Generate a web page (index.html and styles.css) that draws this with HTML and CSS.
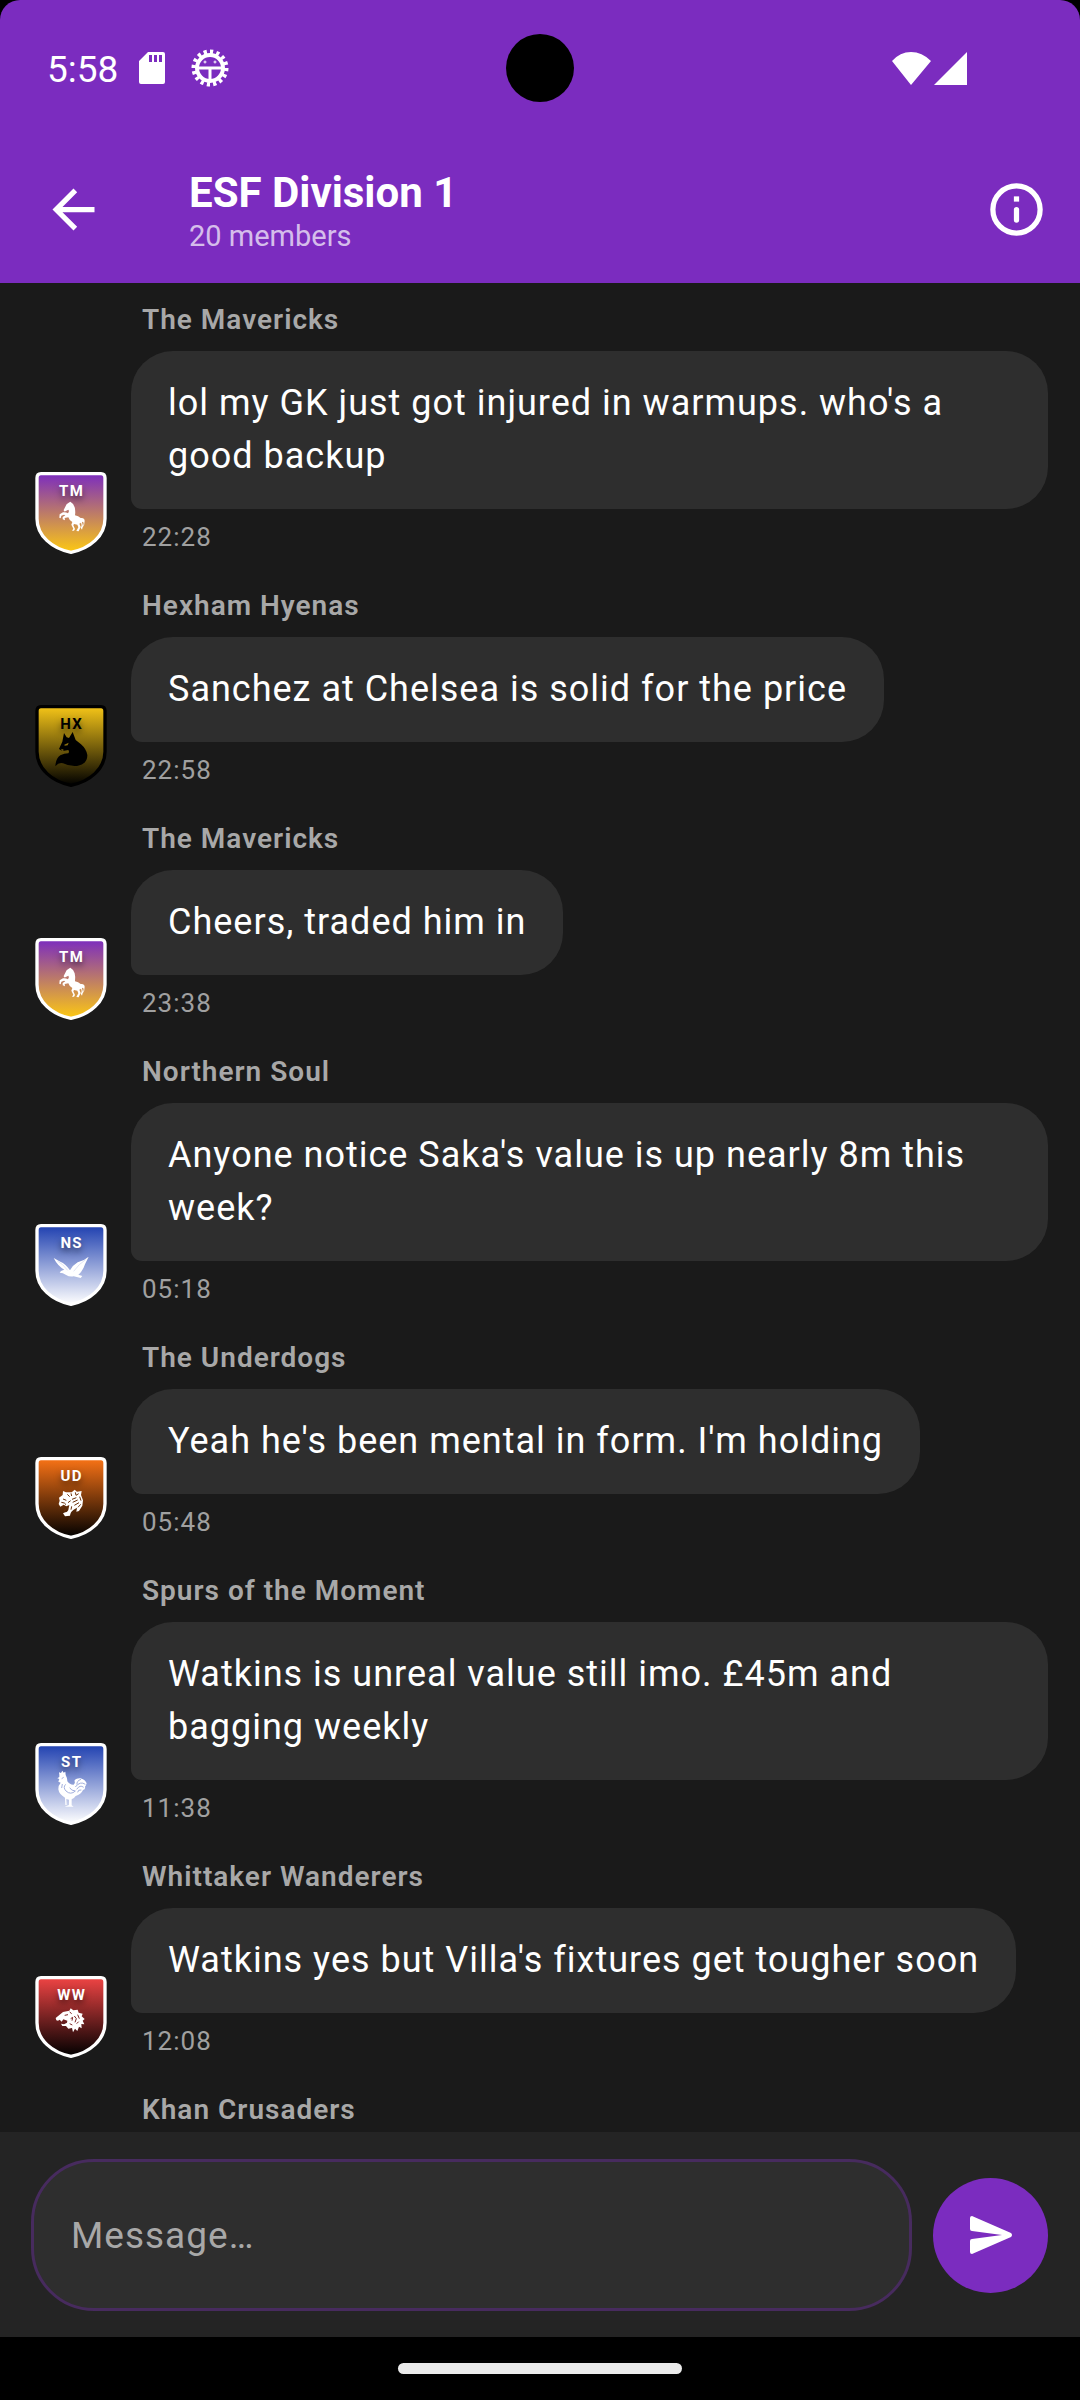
FILE: index.html
```html
<!DOCTYPE html>
<html lang="en">

<head>
    <meta charset="utf-8">
    <meta name="viewport" content="width=device-width, initial-scale=1">
    <title>ESF Division 1</title>
    <link rel="stylesheet" href="styles.css">
</head>

<body>
    <!-- Shared shapes for the club badges -->
    <svg class="defs" aria-hidden="true">
        <defs>
            <linearGradient id="gradTM" x2="0" y2="1"><stop stop-color="#7b2cbf" /><stop offset="1" stop-color="#fdc912" /></linearGradient>
            <linearGradient id="gradHX" x2="0" y2="1"><stop stop-color="#f5c518" /><stop offset="1" stop-color="#000" /></linearGradient>
            <linearGradient id="gradBlue" x2="0" y2="1"><stop stop-color="#1f40b0" /><stop offset="1" stop-color="#fff" /></linearGradient>
            <linearGradient id="gradUD" x2="0" y2="1"><stop stop-color="#f97316" /><stop offset="1" stop-color="#000" /></linearGradient>
            <linearGradient id="gradWW" x2="0" y2="1"><stop stop-color="#ef4444" /><stop offset="1" stop-color="#000" /></linearGradient>
            <path id="shield" d="M18 5H198Q210 5 210 18V140C210 192 164 230 108 241C52 230 6 192 6 140V18Q6 5 18 5Z" />
            <g id="horse">
                <path d="M106 89L100 93Q94 95 91 104L86 114Q86 119 91 118L100 113Q104 117 99 124Q92 120 84 121L74 127L73 137L77 139L79 131L87 128L91 130L83 135L83 142L90 145L89 138L100 136Q102 144 112 150L109 158L115 170L111 176H117L120 171L115 160L117 156L127 158L130 166L124 177L131 178L137 164L133 155L138 152Q142 162 137 167L141 173L144 162L141 151Q145 146 146 155L143 166Q149 160 149 146Q148 136 137 138Q130 132 120 130Q122 118 119 106Q116 94 106 89Z" />
            </g>
            <g id="fox">
                <path d="M87 84L82 110L72 132Q78 138 88 137L100 135Q104 141 100 145Q88 145 76 151Q62 161 61 184Q72 171 84 175Q104 185 126 183Q158 177 157 150Q154 132 138 118L122 105L113 81L102 99L95 97Z" />
                <path class="fox-eye" d="M88 119L101 113L98 121L89 122ZM77 131L86 134L84 138Z" />
            </g>
            <g id="gull">
                <path d="M56 102Q68 126 88 137Q76 140 74 146Q84 146 92 152Q104 160 116 157L137 162L142 156L130 152Q144 141 150 121L161 98Q146 111 128 115Q114 123 105 139Q92 119 76 113Z" />
                <path class="gull-line" d="M67 111Q83 119 98 139M152 107Q132 119 116 142" />
            </g>
            <g id="tiger">
                <path d="M84 102L93 106L110 106L119 98L126 104L140 102L138 114L144 130L142 146L132 162L124 164L126 152L116 158Q106 164 105 176L90 178L84 169L91 166Q100 165 101 154L103 144L94 148L86 143L76 149L71 141L74 131L72 122L83 114Z" />
                <path class="tiger-line" d="M84 126L94 130M97 112L104 119M108 109L110 117M79 136L88 138L93 143M121 106L123 115L131 110M111 127L124 122M113 136L128 129M118 145L132 137M129 151L137 142M134 119L138 131M99 137L107 131M92 155L88 162M110 148L108 158" />
            </g>
            <g id="rooster">
                <path d="M73 95L72 88L78 90L82 83L86 89L91 86L92 96Q97 106 97 115Q105 126 116 125Q122 118 118 114Q122 105 136 106Q150 109 155 121Q153 128 150 131Q152 140 144 141Q138 155 122 159Q116 168 110 169L110 187L116 191H89L102 186L102 170L94 168L95 186L91 186L90 164Q72 154 70 139Q70 126 77 119L70 116L73 108L67 106L73 102Z" />
                <path class="rooster-line" d="M86 103L80 107M92 124Q83 133 93 144Q107 157 121 144Q108 143 104 134M121 132Q136 113 151 124M125 139Q135 124 146 133M126 125Q124 114 138 109M128 148Q129 139 139 141M82 123L80 135" />
            </g>
            <g id="wolf">
                <path d="M62 126L84 108L103 104L107 97L115 103L128 101L131 110L143 113L140 121L149 129L143 134L148 145L139 144L140 157L132 152L127 165L120 158L114 169L111 156L100 158L93 150L82 150L78 143L87 145L96 140L97 134L85 130L80 137L74 131L69 134L64 133Z" />
                <path class="wolf-line" d="M89 118L99 116M104 108L110 113M107 128L113 124L111 134M118 120L124 128L120 139M128 116L133 128M125 143L131 137M104 143L112 147" />
            </g>
        </defs>
    </svg>

    <div class="app">
        <header class="header">
            <div class="status-bar">
                <span class="clock">5:58</span>
                <svg class="sd-card" viewBox="0 0 26 32" aria-hidden="true">
                    <path fill-rule="evenodd" d="M9 0H24Q26 0 26 2V30Q26 32 24 32H2Q0 32 0 30V9ZM10 3V10H13V3ZM15 3V10H18V3ZM20 3V10H23V3Z" />
                </svg>
                <svg class="bug" viewBox="0 0 38 38" aria-hidden="true">
                    <circle cx="19" cy="19" r="16" pathLength="32" stroke-width="5" stroke-dasharray="1 1" />
                    <circle cx="19" cy="19" r="13" stroke-width="4" />
                    <path d="M7 19H31M19 19V32" stroke-width="3" />
                    <circle cx="14" cy="13" r="1" />
                    <circle cx="24" cy="13" r="1" />
                </svg>
                <svg class="signals" viewBox="0 0 75 33" aria-hidden="true">
                    <path d="M0 9Q8 0 19 0T39 9L19 33ZM42 33L75 0V33Z" />
                </svg>
                <span class="camera"></span>
            </div>
            <div class="toolbar">
                <button type="button" class="icon-button" aria-label="Back">
                    <svg viewBox="0 0 24 24"><path d="M20 11H7.8l5.6-5.6L12 4l-8 8 8 8 1.4-1.4L7.8 13H20z" /></svg>
                </button>
                <div class="title-block">
                    <h1 class="title">ESF Division 1</h1>
                    <p class="subtitle">20 members</p>
                </div>
                <button type="button" class="icon-button" aria-label="Group info">
                    <svg viewBox="0 0 24 24">
                        <circle cx="12" cy="12" r="9" fill="none" stroke="#fff" stroke-width="2" />
                        <path d="M11 7h2v2h-2z" />
                        <rect x="11" y="11" width="2" height="6" rx="1" />
                    </svg>
                </button>
            </div>
        </header>

        <main class="messages">
            <article class="message">
                <svg class="badge" viewBox="0 0 216 246">
                    <use href="#shield" fill="url(#gradTM)" />
                    <text x="110" y="71">TM</text>
                    <use href="#horse" />
                </svg>
                <div class="content">
                    <h2 class="sender">The Mavericks</h2>
                    <p class="bubble">lol my GK just got injured in warmups. who's a good backup</p>
                    <time class="time">22:28</time>
                </div>
            </article>

            <article class="message">
                <svg class="badge badge-dark" viewBox="0 0 216 246">
                    <use href="#shield" fill="url(#gradHX)" />
                    <text x="110" y="71">HX</text>
                    <use href="#fox" />
                </svg>
                <div class="content">
                    <h2 class="sender">Hexham Hyenas</h2>
                    <p class="bubble">Sanchez at Chelsea is solid for the price</p>
                    <time class="time">22:58</time>
                </div>
            </article>

            <article class="message">
                <svg class="badge" viewBox="0 0 216 246">
                    <use href="#shield" fill="url(#gradTM)" />
                    <text x="110" y="71">TM</text>
                    <use href="#horse" />
                </svg>
                <div class="content">
                    <h2 class="sender">The Mavericks</h2>
                    <p class="bubble">Cheers, traded him in</p>
                    <time class="time">23:38</time>
                </div>
            </article>

            <article class="message">
                <svg class="badge" viewBox="0 0 216 246">
                    <use href="#shield" fill="url(#gradBlue)" />
                    <text x="110" y="71">NS</text>
                    <use href="#gull" />
                </svg>
                <div class="content">
                    <h2 class="sender">Northern Soul</h2>
                    <p class="bubble">Anyone notice Saka's value is up nearly 8m this week?</p>
                    <time class="time">05:18</time>
                </div>
            </article>

            <article class="message">
                <svg class="badge" viewBox="0 0 216 246">
                    <use href="#shield" fill="url(#gradUD)" />
                    <text x="110" y="71">UD</text>
                    <use href="#tiger" />
                </svg>
                <div class="content">
                    <h2 class="sender">The Underdogs</h2>
                    <p class="bubble">Yeah he's been mental in form. I'm holding</p>
                    <time class="time">05:48</time>
                </div>
            </article>

            <article class="message">
                <svg class="badge" viewBox="0 0 216 246">
                    <use href="#shield" fill="url(#gradBlue)" />
                    <text x="110" y="71">ST</text>
                    <use href="#rooster" />
                </svg>
                <div class="content">
                    <h2 class="sender">Spurs of the Moment</h2>
                    <p class="bubble">Watkins is unreal value still imo. £45m and bagging weekly</p>
                    <time class="time">11:38</time>
                </div>
            </article>

            <article class="message">
                <svg class="badge" viewBox="0 0 216 246">
                    <use href="#shield" fill="url(#gradWW)" />
                    <text x="110" y="71">WW</text>
                    <use href="#wolf" />
                </svg>
                <div class="content">
                    <h2 class="sender">Whittaker Wanderers</h2>
                    <p class="bubble">Watkins yes but Villa's fixtures get tougher soon</p>
                    <time class="time">12:08</time>
                </div>
            </article>

            <article class="message message-last">
                <div class="content">
                    <h2 class="sender">Khan Crusaders</h2>
                </div>
            </article>
        </main>

        <form class="composer">
            <input type="text" class="message-input" aria-label="Message" placeholder="Message…">
            <button type="submit" class="send-button" aria-label="Send">
                <svg viewBox="0 0 42 38"><path d="M0 2Q0 0 2 0L41 17Q43 19 41 21L2 38Q0 38 0 36V25Q0 23 2 23L32 19L2 15Q0 15 0 13Z" /></svg>
            </button>
        </form>

        <footer class="nav-bar">
            <span class="nav-handle"></span>
        </footer>
    </div>
</body>

</html>
```
FILE: styles.css
```css
* {
    box-sizing: border-box;
}

body {
    margin: 0;
    background-color: #000;
    font-family: Roboto, sans-serif;
    color: #fff;
}

h1,
h2,
p {
    margin: 0;
}

button {
    padding: 0;
    border: none;
    cursor: pointer;
}

.defs {
    position: absolute;
    width: 0;
    height: 0;
}

.app {
    display: flex;
    flex-direction: column;
    height: 100vh;
}

/* Header */

.header {
    flex: none;
    background-color: #7b2cbf;
    border-radius: 20px 20px 0 0;
}

.status-bar {
    position: relative;
    display: flex;
    align-items: center;
    height: 136px;
    padding: 0 113px 0 47px;
}

.status-bar svg {
    fill: #fff;
}

.clock {
    padding-top: 3px;
    font-size: 37px;
    line-height: 44px;
}

.status-bar .sd-card {
    width: 26px;
    height: 32px;
    margin-left: 21px;
}

.status-bar .bug {
    width: 38px;
    height: 38px;
    margin-left: 26px;
    fill: none;
    stroke: #fff;
}

.status-bar .signals {
    width: 75px;
    height: 33px;
    margin-left: auto;
}

.camera {
    position: absolute;
    top: 34px;
    left: 50%;
    width: 68px;
    height: 68px;
    margin-left: -34px;
    border-radius: 50%;
    background-color: #000;
}

.toolbar {
    display: flex;
    align-items: center;
    height: 147px;
    padding: 0 32px 0 42px;
}

.icon-button {
    width: 63px;
    height: 63px;
    background: none;
}

.icon-button svg {
    display: block;
    fill: #fff;
}

.title-block {
    flex: 1;
    padding-top: 3px;
    padding-left: 84px;
}

.title {
    font-size: 42px;
    line-height: 50px;
    font-weight: 700;
}

.subtitle {
    font-size: 29px;
    line-height: 36px;
    color: rgba(255, 255, 255, 0.7);
}

/* Conversation */

.messages {
    flex: 1;
    min-height: 0;
    overflow: hidden;
    padding: 16px 32px 0 35px;
    background-color: #1a1a1a;
}

.message {
    display: flex;
    align-items: flex-end;
    gap: 24px;
    margin-bottom: 27px;
}

.message-last {
    padding-left: 96px;
}

.badge {
    flex: none;
    width: 72px;
    height: 82px;
    margin-bottom: 4px;
    fill: #fff;
    stroke: none;
}

.badge use[href="#shield"] {
    stroke: #fff;
    stroke-width: 10px;
}

.badge text {
    font-size: 45px;
    font-weight: 700;
    letter-spacing: 4px;
    text-anchor: middle;
    text-shadow: 0 4px 6px rgba(0, 0, 0, 0.5);
}

.badge-dark {
    fill: #000;
}

.badge-dark use[href="#shield"] {
    stroke: #000;
}

.fox-eye {
    fill: #8d7110;
}

.gull-line,
.tiger-line,
.rooster-line,
.wolf-line {
    fill: none;
    stroke-width: 3px;
}

.gull-line {
    stroke: #dfe4f4;
}

.tiger-line {
    stroke: #6b3009;
}

.rooster-line {
    stroke: #a3b0de;
}

.wolf-line {
    stroke: #7b2525;
}

.content {
    flex: 1;
    display: flex;
    flex-direction: column;
    align-items: flex-start;
}

.sender {
    padding-left: 11px;
    margin-bottom: 10px;
    font-size: 28px;
    line-height: 42px;
    font-weight: 600;
    letter-spacing: 1px;
    color: #a8a8a8;
}

.bubble {
    padding: 26px 37px;
    border-radius: 42px 42px 42px 11px;
    background-color: #2e2e2e;
    font-size: 36px;
    line-height: 53px;
    letter-spacing: 1px;
}

.time {
    margin-top: 7px;
    padding-left: 11px;
    font-size: 26px;
    line-height: 42px;
    letter-spacing: 1px;
    color: #a0a0a0;
}

/* Composer */

.composer {
    flex: none;
    display: flex;
    align-items: center;
    gap: 21px;
    padding: 27px 32px 26px 31px;
    background-color: #242424;
}

.message-input {
    flex: 1;
    min-width: 0;
    height: 152px;
    padding: 0 37px;
    border: 3px solid #472b5e;
    border-radius: 63px;
    outline: none;
    background-color: #2e2e2e;
    font-family: inherit;
    font-size: 37px;
    letter-spacing: 1px;
    color: #fff;
}

.message-input::placeholder {
    color: #a8a8a8;
    opacity: 1;
}

.send-button {
    display: flex;
    align-items: center;
    justify-content: center;
    width: 115px;
    height: 115px;
    border-radius: 50%;
    background-color: #7b2cbf;
}

.send-button svg {
    width: 42px;
    height: 38px;
    fill: #fff;
}

.nav-bar {
    flex: none;
    display: flex;
    align-items: center;
    justify-content: center;
    height: 63px;
    background-color: #000;
}

.nav-handle {
    width: 284px;
    height: 11px;
    border-radius: 6px;
    background-color: #ebebeb;
}
```
